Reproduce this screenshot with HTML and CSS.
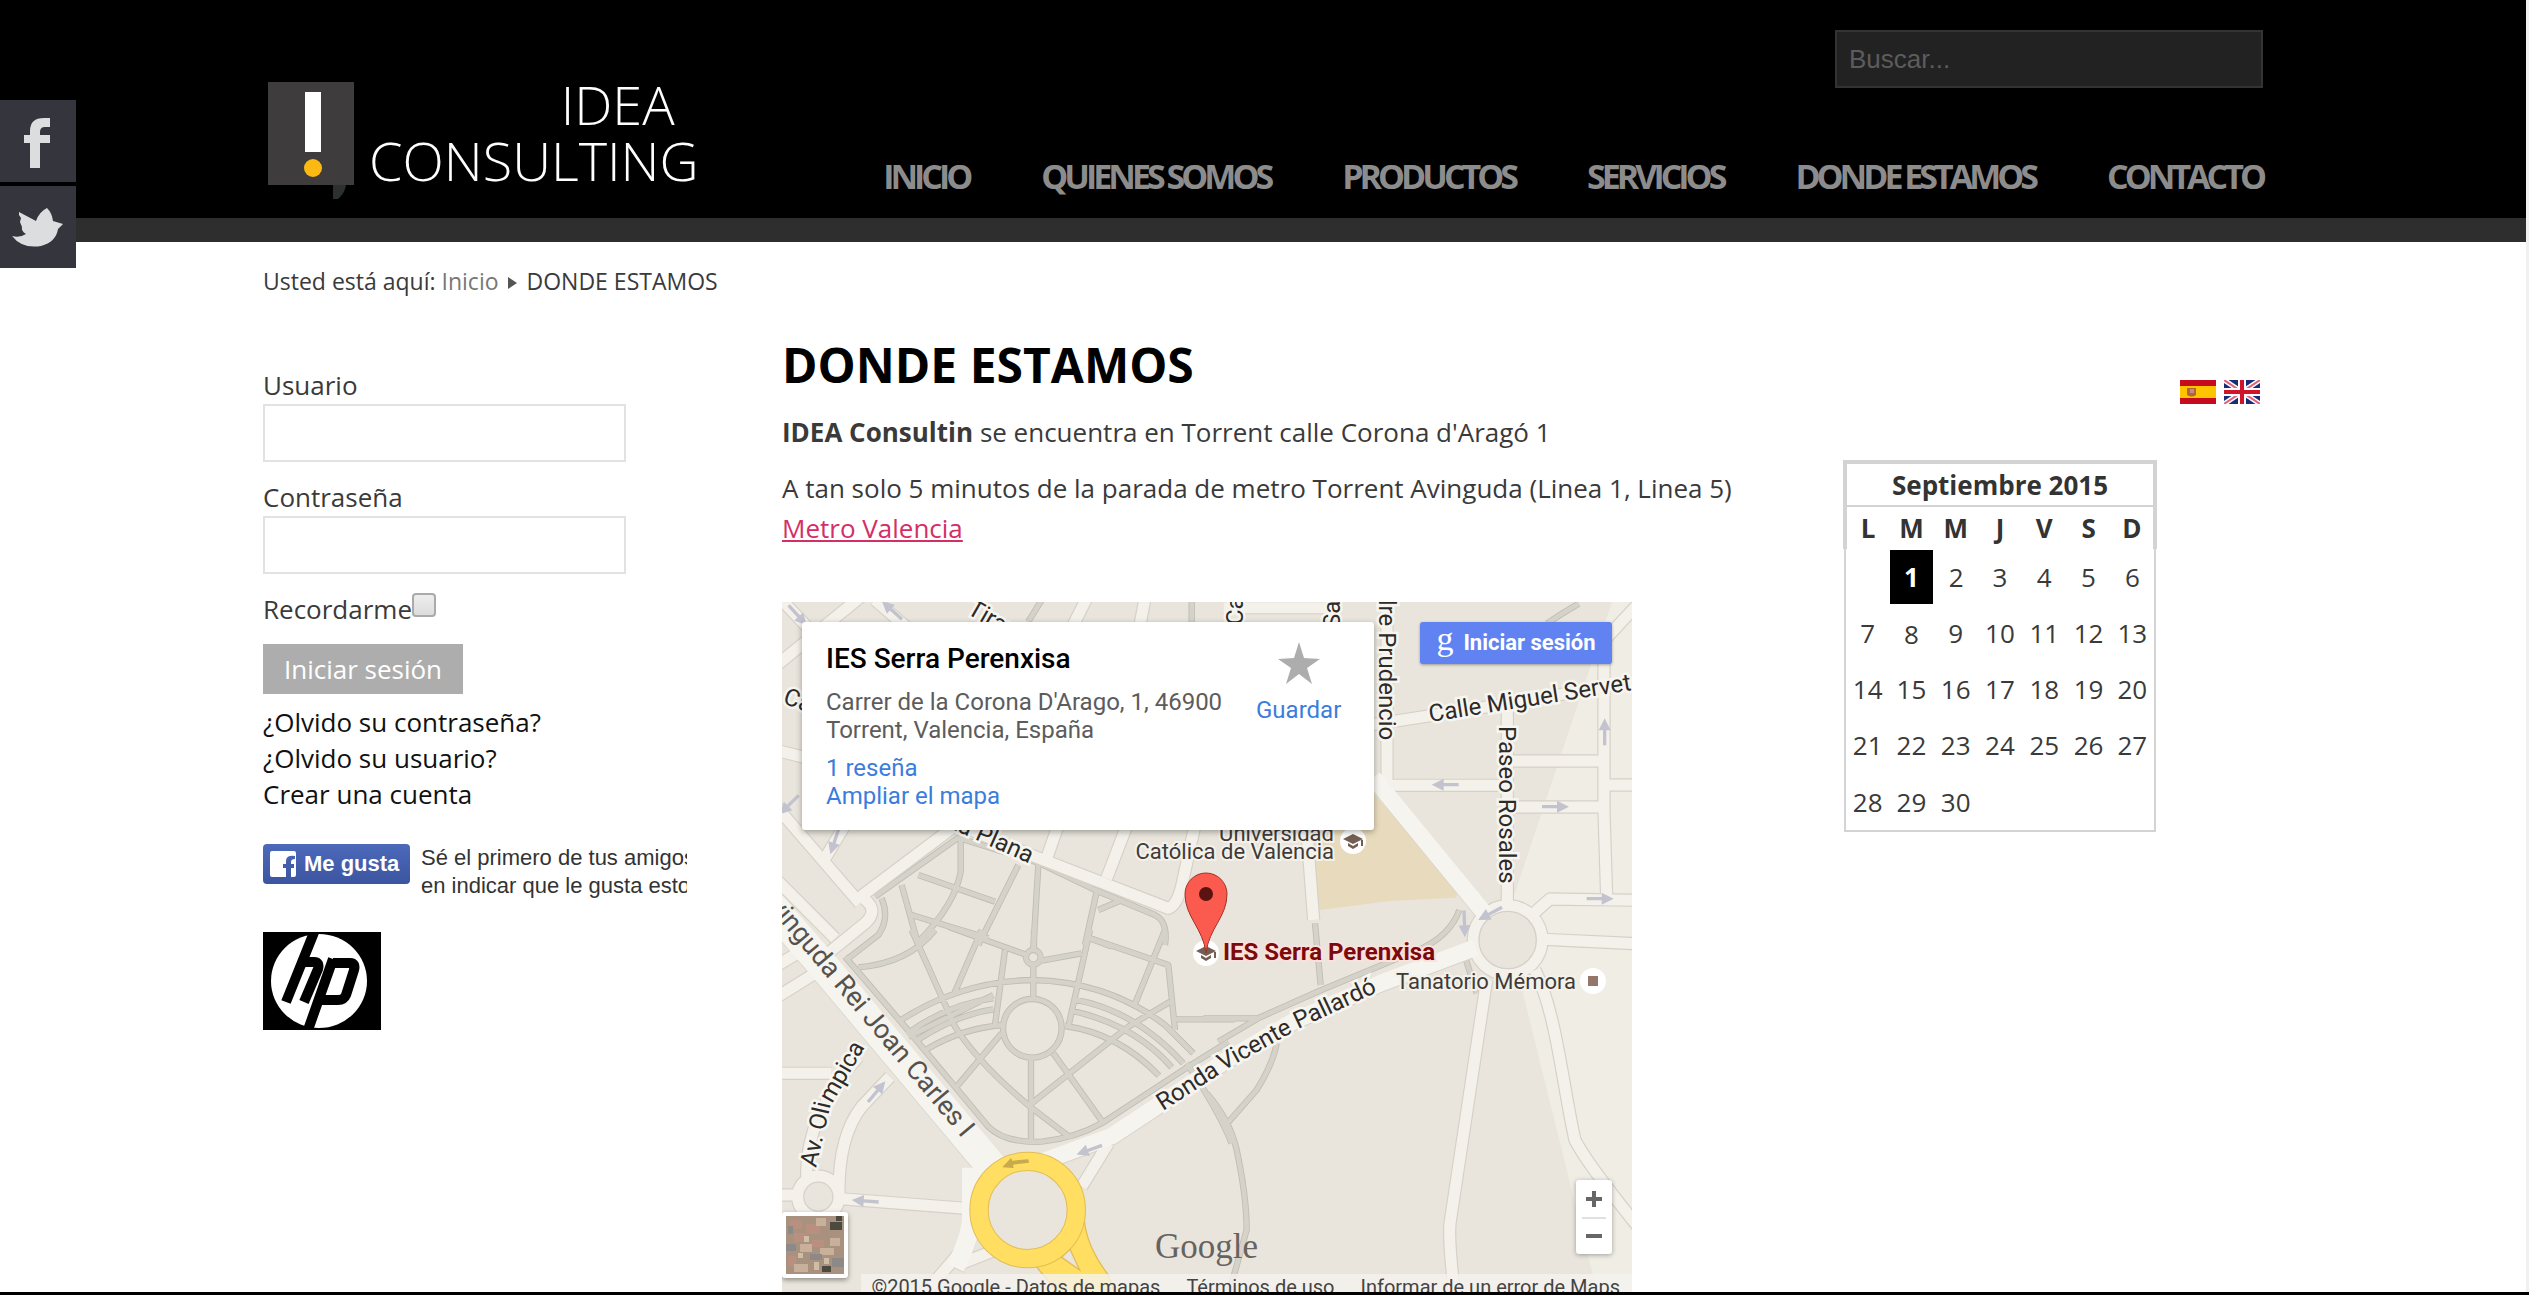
FILE: index.html
```html
<!DOCTYPE html>
<html lang="es">
<head>
<meta charset="utf-8">
<meta name="viewport" content="width=device-width, initial-scale=1">
<title>DONDE ESTAMOS</title>
<link rel="stylesheet" href="styles.css">
</head>
<body>
<header class="header">
  <div class="wrap header-inner">
    <a class="logo" href="#" aria-label="IDEA Consulting">
      <svg class="logo-mark" viewBox="0 0 88 118" aria-hidden="true">
        <path fill="#3e3c3d" d="M1 0h86v103H1z"/>
        <path fill="#2c3030" d="M66 103h13q-1 8-8 14h-5z"/>
        <path fill="#fff" d="M38 10h16v60H38z"/>
        <circle cx="46" cy="86" r="9" fill="#fdb913"/>
      </svg>
      <span class="logo-text"><span class="logo-top">IDEA</span><span>CONSULTING</span></span>
    </a>
    <div class="header-right">
      <form class="search"><input type="search" placeholder="Buscar..." aria-label="Buscar"></form>
      <nav class="menu">
        <a href="#">INICIO</a>
        <a href="#">QUIENES SOMOS</a>
        <a href="#">PRODUCTOS</a>
        <a href="#">SERVICIOS</a>
        <a href="#">DONDE ESTAMOS</a>
        <a href="#">CONTACTO</a>
      </nav>
    </div>
  </div>
</header>

<aside class="social">
  <a href="#" aria-label="Facebook"><svg viewBox="0 0 76 82"><path fill="#dcdddf" d="M50 18v9h-5q-5 0-5 5v3h10v8H40v25H30V43h-6v-8h6v-4q0-13 14-13z"/></svg></a>
  <a href="#" aria-label="Twitter"><svg viewBox="0 0 76 82"><path fill="#dcdddf" d="M19 26l17 9q3-9 11-13 5 5 6 13l10 3-5 5q-2 13-17 17-19 3-29-10 8 2 14-2-5-3-4-7l-2-5 1-4-2-3z"/></svg></a>
</aside>

<div class="wrap">
  <nav class="breadcrumb"><span>Usted está aquí:</span><a href="#">Inicio</a><svg viewBox="0 0 10 12"><path fill="#555" d="M0 0l9 6-9 6z"/></svg><span class="here">DONDE ESTAMOS</span></nav>
  <div class="columns">
    <div class="left">
      <form class="login">
        <label for="user">Usuario</label>
        <input class="field" id="user" type="text">
        <label for="pass">Contraseña</label>
        <input class="field" id="pass" type="password">
        <div class="remember"><label for="rem">Recordarme</label><input id="rem" type="checkbox"></div>
        <button type="button">Iniciar sesión</button>
      </form>
      <ul class="links">
        <li><a href="#">¿Olvido su contraseña?</a></li>
        <li><a href="#">¿Olvido su usuario?</a></li>
        <li><a href="#">Crear una cuenta</a></li>
      </ul>
      <div class="like">
        <button type="button"><svg viewBox="0 0 26 26"><path fill="#fff" fill-rule="evenodd" d="M2 0h22q2 0 2 2v22q0 2-2 2h-3V17h3v-4h-3v-2q0-3 4-3V5q-9-1-9 5v3h-3v4h3v9H2q-2 0-2-2V2q0-2 2-2z"/></svg>Me gusta</button>
        <p>Sé el primero de tus amigos<br>en indicar que le gusta esto.</p>
      </div>
      <svg class="hp" viewBox="0 0 118 98" role="img" aria-label="hp">
        <path d="M0 0h118v98H0z"/>
        <ellipse cx="56" cy="49" rx="48" ry="47" fill="#fff"/>
        <g fill="none" stroke="#000" stroke-width="10">
          <path d="M52-2L23 70M39 30h12q6 0 4 7L41 70"/>
          <path d="M70 27L45 98M70 31h17q6 0 4 7l-8 25q-2 5-8 5H59"/>
        </g>
      </svg>
    </div>

    <main class="main">
      <h1>DONDE ESTAMOS</h1>
      <p><strong>IDEA Consultin</strong> se encuentra en Torrent calle Corona d'Aragó 1</p>
      <p>A tan solo 5 minutos de la parada de metro Torrent Avinguda (Linea 1, Linea 5)<br><a href="#">Metro Valencia</a></p>
      <div class="map">
        <svg class="tiles" viewBox="0 0 850 710" preserveAspectRatio="xMidYMin slice">
          <defs>
            <g id="paths" fill="none" stroke-linejoin="round">
              <g transform="translate(-21 -21)">
                <path d="M300 905L550 728 790 803 960 885 1140 960Q1180 980 1170 1050M557 735V830Q540 930 430 1040M320 910Q345 970 310 1020L220 1090M380 870L430 1050M410 960L540 1000 640 1030M430 840L660 920M730 810L610 1050M790 810L775 1060M965 890L930 1050M970 945L1040 915M945 1030L1010 1055M760 80L800 15M1250 20V90"/>
              </g>
              <g transform="translate(-21 984)">
                <circle cx="772" cy="295" r="88"/><circle cx="775" cy="82" r="22"/>
                <path d="M777 0V60M775 104V205M768 383V632M210 80L390 290 640 590Q690 640 800 635 900 625 980 580L1240 410 1360 335M375 272Q560 152 775 150 1000 155 1170 285L1255 370M395 312Q520 222 655 205M420 335Q540 255 655 238M455 358Q560 295 685 285M895 208Q1080 240 1225 400M890 242Q1080 285 1190 412M870 288Q1030 310 1152 437M410 0L540 290Q610 400 765 530L880 618M620 0L538 190M480 0Q400 100 250 112M520-10L755 75M800 92L920 70M945 0L880 290M690 60L660 285M680 310L545 470M400 320L655 195M835 370L982 575M770 520L1060 290 1185 215M945 25L1180 105 1200 300M1170 0L1080 222M1200 268H1380M1235 400Q1330 540 1370 640"/>
              </g>
              <g transform="translate(1284 984)">
                <path d="M-20 265H140M25 335L150 262 330 182 620 62Q720 20 748-60M315-20L332 165M200 340Q190 400 140 480L52 580M-10 490Q60 570 80 660 110 800 110 900L65 1060M765 80L800 190"/>
              </g>
              <path d="M2295 65Q2330 40 2390 5"/>
            </g>
            <g id="roads" fill="none" stroke-linejoin="round">
              <g transform="translate(-21 -21)">
                <path d="M0 630L255 925M250 910L590 655M0 215L270-5M20 15L110 110M250 900Q320 940 270 985L165 1070M0 465L100 490M150 790L210 690M420 635L780 785 1180 940Q1210 930 1225 850L1260 690M815 790L850 690M995 850L1060 680M300 15L410 110M890 100L935 10M1095 90L1110 10M0 850L180 1030"/>
              </g>
              <g transform="translate(1284 -21)">
                <path d="M40 38H350M531 0V570M510 571H880M480 390L900 325 1300 255M892 340V950M890 498H1180M890 636H1180M1182 180V650L1190 905M1170 150L1300 10M1185 570H1300M290 700L311 975M960 965L1020 912 1300 916"/>
                <circle cx="893" cy="1035" r="103"/>
              </g>
              <g transform="translate(1284 984)">
                <path d="M830 150L720 880Q715 940 735 1100M975 120C1040 250 1060 480 1095 630Q1130 700 1300 910M1000 28L1300 42"/>
              </g>
              <g transform="translate(-21 984)">
                <path d="M192 790Q190 620 260 530L345 440M95 740Q90 560 250 380M180 805L570 835M-10 795H70M0 430H170M0 205L120 130M0 110L100 50M920 770L1000 640M560 1000L740 930M560 960L450 1090"/>
                <circle cx="130" cy="800" r="62"/>
              </g>
            </g>
            <g id="avenues" fill="none" stroke-linejoin="round">
              <path stroke-width="50" d="M760 1690L990 1605 1330 1380 1540 1258 1800 1145 2080 1040M1774 530L2110 940"/>
              <path stroke-width="56" d="M568 1700V1850Q565 1910 520 2000"/>
              <path stroke-width="92" d="M-50 895L120 1090 640 1710"/>
            </g>
            <path id="arrow" d="M0-5H30V-18L54 0 30 18V5H0z" transform="scale(1.5 1)"/>
          </defs>
          <g transform="scale(.33333)">
            <path fill="#e9e5dd" d="M0 0h2550v2130H0z"/>
            <path fill="#f0ede5" d="M2490 0h60v2130h-90L2170 960z"/>
            <path fill="#e8dbbd" d="M1570 700L1775 575 2030 860 2022 887 1824 897 1614 924z"/>
            <use href="#paths" stroke="#bfbcb3" stroke-width="19"/>
            <use href="#paths" stroke="#d5d2c9" stroke-width="14"/>
            <use href="#roads" stroke="#d5d1c8" stroke-width="40"/>
            <g stroke="#d5d1c8"><use href="#avenues"/></g>
            <use href="#roads" stroke="#f4f1eb" stroke-width="33"/>
            <g stroke="#f6f4ee" transform="translate(0 -3)"><use href="#avenues"/></g>
            <circle cx="2177" cy="1014" r="86" fill="#e9e5dd" stroke="#d5d1c8" stroke-width="4"/>
            <g transform="translate(-21 984)">
              <path fill="#ffde62" stroke="#e2bd55" stroke-width="4" d="M928 870Q935 950 1000 1035L1040 1150H900L780 1005z"/>
              <circle cx="758" cy="840" r="146" fill="#e9e5dd" stroke="#e2bd55" stroke-width="58"/>
              <circle cx="758" cy="840" r="146" fill="none" stroke="#ffde62" stroke-width="52"/>
              <path fill="#e9e5dd" stroke="#e2bd55" stroke-width="4" d="M885 958L914 1020 860 982z"/>
              <path fill="#c8a94b" d="M682 712l26-28 4 8 48-4 2 10-48 6 2 10z"/>
            </g>
            <g fill="#c2c3cf">
              <use href="#arrow" transform="translate(2030 548) rotate(180)"/>
              <use href="#arrow" transform="translate(2280 614)"/>
              <use href="#arrow" transform="translate(2414 890)"/>
              <use href="#arrow" transform="translate(2468 430) rotate(-90)"/>
              <use href="#arrow" transform="translate(2046 925) rotate(88)"/>
              <use href="#arrow" transform="translate(2160 916) rotate(152)"/>
              <use href="#arrow" transform="translate(20 10) rotate(48)"/>
              <use href="#arrow" transform="translate(360 52) rotate(222)"/>
              <use href="#arrow" transform="translate(50 580) rotate(135)"/>
              <use href="#arrow" transform="translate(170 680) rotate(108)"/>
              <use href="#arrow" transform="translate(258 1500) rotate(-50)"/>
              <use href="#arrow" transform="translate(290 1800) rotate(184)"/>
              <use href="#arrow" transform="translate(960 1630) rotate(160)"/>
            </g>
          </g>
          <g class="street">
            <text transform="translate(184 11) rotate(30)">Tirant</text>
            <text transform="translate(0 101) rotate(20)">Calle</text>
            <text transform="translate(163 224) rotate(24)">La Plana</text>
            <text transform="translate(461 23) rotate(-90)">Cal</text>
            <text transform="translate(558 26) rotate(-90)">Sant</text>
            <text transform="translate(597 -38) rotate(90)">Padre Prudencio</text>
            <text transform="translate(648 120) rotate(-9)">Calle Miguel Servet</text>
            <text transform="translate(717 124) rotate(90)">Paseo Rosales</text>
            <text transform="translate(381 509) rotate(-33)">Ronda</text>
            <text transform="translate(441 469) rotate(-29)">Vicente</text>
            <text transform="translate(516 427) rotate(-25)">Pallardó</text>
            <text transform="translate(34 566) rotate(-77)">Av. Oli</text>
            <text transform="translate(50 502) rotate(-60)">mpica</text>
          </g>
          <text class="avenue" transform="translate(-25 292) rotate(50)">Avinguda Rei Joan Carles I</text>
          <g class="place">
            <text x="552" y="239" text-anchor="end">Universidad</text>
            <text x="552" y="257" text-anchor="end">Católica de Valencia</text>
            <text x="614" y="387">Tanatorio Mémora</text>
            <text class="target" x="441" y="358">IES Serra Perenxisa</text>
          </g>
          <g fill="#fff">
            <circle cx="571" cy="239" r="13"/><circle cx="424" cy="351" r="13"/><circle cx="811" cy="379" r="13"/>
          </g>
          <g fill="#735e54">
            <g id="cap"><path d="M561 237l10-5 10 5-10 5zM566 241l5 3 5-3v3l-5 3-5-3zM579 238h2v6h-2z"/></g>
            <use href="#cap" x="-147" y="112"/>
            <path fill="#94776a" d="M806 374h10v10h-10z"/>
          </g>
          <path fill="#fb5b4f" stroke="#a52f27" d="M424 351C421 326 403 315 403 292A21 21 0 0 1 445 292C445 315 427 326 424 351z"/>
          <circle cx="424" cy="292" r="7" fill="#5a1310"/>
        </svg>
        <div class="place-card">
          <div class="place-info">
            <h2>IES Serra Perenxisa</h2>
            <address>Carrer de la Corona D'Arago, 1, 46900<br>Torrent, Valencia, España</address>
            <a href="#">1 reseña</a>
            <a href="#">Ampliar el mapa</a>
          </div>
          <a class="save" href="#"><svg viewBox="0 0 42 42"><path fill="#adadad" d="M21 0l5 16 16 1-13 9 5 16-13-10L8 42l5-16L0 17l16-1z"/></svg>Guardar</a>
        </div>
        <button class="signin" type="button"><span class="g">g</span>Iniciar sesión</button>
        <button class="sat" type="button" aria-label="Satélite"><svg viewBox="0 0 58 58">
          <path fill="#a8917f" d="M0 0h58v58H0z"/>
          <g fill="#b99080"><path d="M4 4h12v9H4zM20 8h14v10H20zM8 17h12v9H8zM2 40h8v10H2zM26 24h12v7H26z"/></g>
          <g fill="#c9b09a"><path d="M14 28h12v8H14zM34 32h14v7H34zM8 48h14v8H8zM44 22h10v8H44zM30 2h10v8H30z"/></g>
          <g fill="#8d8987"><path d="M0 28h10v7H0zM24 38h12v6H24zM46 42h12v9H46zM2 10h5v8H2z"/></g>
          <g fill="#4c493f"><path d="M44 6h12v8H44zM36 50h9v6h-9zM50 0h6v5h-6z"/></g>
          <g fill="#d0bda6"><path d="M18 20h5v6h-5zM38 42h5v6h-5zM12 37h5v5h-5zM28 46h5v8h-5z"/></g>
        </svg></button>
        <span class="brand">Google</span>
        <div class="zoom"><button type="button" aria-label="Acercar"></button><button class="out" type="button" aria-label="Alejar"></button></div>
        <div class="terms"><span>©2015 Google - Datos de mapas</span><a href="#">Términos de uso</a><a href="#">Informar de un error de Maps</a></div>
      </div>
    </main>

    <aside class="right">
      <div class="flags">
        <a href="#" aria-label="Español"><svg viewBox="0 0 36 24"><path fill="#c60b1e" d="M0 0h36v24H0z"/><path fill="#ffc400" d="M0 6h36v12H0z"/><path fill="#ad6a2c" d="M7 8h9v7q-4 3-9 0z"/><path fill="#c9849a" d="M10 9h4v4h-4z"/></svg></a>
        <a href="#" aria-label="English"><svg viewBox="0 0 36 24"><path fill="#1b2c77" d="M0 0h36v24H0z"/><path stroke="#fff" stroke-width="5" d="M0 0l36 24M36 0L0 24"/><path stroke="#e0627a" stroke-width="2" d="M0 0l36 24M36 0L0 24"/><path stroke="#fff" stroke-width="8" d="M18 0v24M0 12h36"/><path stroke="#cf142b" stroke-width="4" d="M18 0v24M0 12h36"/></svg></a>
      </div>
      <table class="calendar">
        <thead>
          <tr class="month"><th colspan="7">Septiembre 2015</th></tr>
          <tr class="days"><th>L</th><th>M</th><th>M</th><th>J</th><th>V</th><th>S</th><th>D</th></tr>
        </thead>
        <tbody>
          <tr><td></td><td class="today">1</td><td>2</td><td>3</td><td>4</td><td>5</td><td>6</td></tr>
          <tr><td>7</td><td>8</td><td>9</td><td>10</td><td>11</td><td>12</td><td>13</td></tr>
          <tr><td>14</td><td>15</td><td>16</td><td>17</td><td>18</td><td>19</td><td>20</td></tr>
          <tr><td>21</td><td>22</td><td>23</td><td>24</td><td>25</td><td>26</td><td>27</td></tr>
          <tr><td>28</td><td>29</td><td>30</td><td></td><td></td><td></td><td></td></tr>
        </tbody>
      </table>
    </aside>
  </div>
</div>
<div class="bottom-bar"></div>
</body>
</html>
```
FILE: styles.css
```css
* { box-sizing: border-box; }
body {
  margin: 0;
  height: 100vh;
  overflow: hidden;
  border-right: 3px solid #f1f1f1;
  background: #fff;
  color: #3a3a3a;
  font: 26px/40px "Open Sans", sans-serif;
}
a { text-decoration: none; color: inherit; }
button, input { font: inherit; margin: 0; }
svg { display: block; }
.wrap { max-width: 2000px; margin: 0 auto; }

/* Header */
.header { background: #000; border-bottom: 24px solid #2e2e2e; }
.header-inner { display: flex; justify-content: space-between; height: 218px; }
.logo { display: flex; gap: 14px; padding: 82px 0 0 4px; color: #fff; }
.logo-mark { width: 88px; height: 118px; }
.logo-text { display: flex; flex-direction: column; margin-top: -6px; font-weight: 300; font-size: 54px; line-height: 56px; }
.logo-top { text-align: right; padding-right: 24px; }
.header-right { display: flex; flex-direction: column; align-items: flex-end; padding-top: 30px; }
.search input {
  width: 428px;
  height: 58px;
  padding: 0 12px;
  border: 2px solid #333;
  border-radius: 0;
  background: #222;
  color: #666;
  font: 26px/40px "Liberation Sans", sans-serif;
}
.search input::placeholder { color: #5c5c5c; opacity: 1; }
.menu { display: flex; gap: 72px; margin-top: 64px; color: #8c8c8c; font-weight: 700; font-size: 34px; line-height: 48px; letter-spacing: -4px; }

/* Social tabs fixed to the window edge */
.social { position: absolute; left: 0; top: 100px; display: flex; flex-direction: column; gap: 4px; background: #000; }
.social a { width: 76px; height: 82px; background: #34353d; }

.breadcrumb { display: flex; align-items: center; padding-top: 19px; margin-bottom: 1px; font-size: 23px; }
.breadcrumb a { margin-left: 6px; color: #777; }
.breadcrumb svg { width: 10px; height: 12px; margin: 4px 9px 0; }

.columns { display: grid; grid-template-columns: 424px 1fr 420px; gap: 95px; }

/* Login column */
.left { padding-top: 64px; }
.login { display: flex; flex-direction: column; align-items: flex-start; }
.login label { line-height: 38px; }
.login .field { width: 363px; height: 58px; margin-bottom: 16px; border: 2px solid #e2e2e2; background: #fff; }
.remember { display: flex; align-items: flex-start; }
.remember input { appearance: none; width: 24px; height: 24px; margin-top: 3px; border: 2px solid #aaa; border-radius: 4px; background: linear-gradient(#eee, #dcdcdc); }
.login button { margin-top: 16px; width: 200px; height: 50px; padding: 0; border: 0; background: #adadad; color: #fff; }
.links { list-style: none; margin: 10px 0 0; padding: 0; color: #111; line-height: 36px; }
.like { display: flex; gap: 11px; margin-top: 32px; overflow: hidden; white-space: nowrap; font: 22px/28px "Liberation Sans", sans-serif; color: #333; }
.like button { flex: none; display: flex; align-items: center; gap: 8px; width: 147px; height: 40px; padding: 0 7px; border: 0; border-radius: 4px; background: linear-gradient(#4c69ba, #3b55a0); color: #fff; font-weight: bold; }
.like svg { width: 26px; height: 26px; }
.like p { margin: 0; }
.hp { width: 118px; height: 98px; margin-top: 32px; }

/* Article */
.main h1 { margin: 34px 0 0; color: #000; font-size: 48px; line-height: 58px; }
.main p { margin: 18px 0 16px; }
.main p + p { margin-top: 0; }
.main p a { color: #d42e67; text-decoration: underline; }
.map { position: relative; width: 850px; margin-top: 54px; overflow: hidden; font-family: Roboto, sans-serif; }
.tiles { width: 100%; }
.street text { font: 24px Roboto, sans-serif; fill: #2d2a28; stroke: #f7f5f0; stroke-width: 5px; paint-order: stroke; }
.avenue { font: 27px Roboto, sans-serif; fill: #55524e; }
.place text { font: 22px Roboto, sans-serif; fill: #3f3b38; stroke: #f4f1eb; stroke-width: 4px; paint-order: stroke; }
.place .target { font-weight: 700; font-size: 24px; fill: #7c0a0a; stroke: #fbe0dc; }
.place-card { position: absolute; left: 20px; top: 20px; display: flex; gap: 32px; width: 572px; height: 208px; padding: 20px 24px; border-radius: 3px; background: #fff; box-shadow: 0 2px 6px #0005; font-size: 24px; line-height: 28px; color: #5c5c5c; white-space: nowrap; }
.place-card h2 { margin: 0 0 12px; color: #000; font-size: 28px; line-height: 34px; font-weight: 500; }
.place-card address { margin-bottom: 10px; font-style: normal; }
.place-info { width: 398px; }
.place-info a { display: block; }
.place-card a { color: #3b7ddd; }
.save { display: flex; flex-direction: column; align-items: center; gap: 12px; }
.save svg { width: 42px; height: 42px; }
.signin { position: absolute; right: 20px; top: 20px; display: flex; align-items: center; justify-content: center; gap: 10px; width: 192px; height: 42px; padding: 0; border: 0; border-radius: 3px; background: #6083f1; color: #fff; font-size: 22px; font-weight: 700; white-space: nowrap; box-shadow: 0 1px 3px #0005; }
.signin .g { font: 34px/34px "Liberation Serif", serif; margin-top: -8px; }
.sat { position: absolute; left: 0; top: 610px; width: 66px; height: 66px; padding: 4px; border: 0; border-radius: 3px; background: #fff; box-shadow: 0 2px 5px #0006; }
.brand { position: absolute; left: 373px; top: 625px; color: #66635f; font: 35px/40px "Liberation Serif", serif; }
.zoom { position: absolute; right: 20px; top: 578px; width: 36px; height: 74px; border-radius: 3px; background: #fff; box-shadow: 0 1px 5px #0005; }
.zoom button { display: block; width: 36px; height: 37px; padding: 0; border: 0; background: linear-gradient(#666, #666) center / 16px 4px no-repeat, linear-gradient(#666, #666) center / 4px 16px no-repeat; }
.zoom .out { background: linear-gradient(#e0e0e0, #e0e0e0) top / 24px 2px no-repeat, linear-gradient(#666, #666) center / 16px 4px no-repeat; }
.terms { position: absolute; right: 0; top: 672px; display: flex; gap: 26px; padding: 0 12px 0 10px; background: #f5f3efcc; color: #444; font-size: 20px; line-height: 26px; white-space: nowrap; }

/* Right column */
.right { padding-top: 78px; }
.flags { display: flex; justify-content: flex-end; gap: 8px; padding-right: 3px; }
.flags svg { width: 36px; height: 24px; }
.calendar { width: 314px; margin-top: 56px; border-collapse: collapse; table-layout: fixed; text-align: center; border: 2px solid #d3d3d3; }
.calendar thead { border: 4px solid #d3d3d3; border-bottom: 0; }
.calendar th, .calendar td { padding: 0; }
.calendar th { height: 43px; color: #333; }
.calendar .month th { height: 44px; border-bottom: 2px solid #d3d3d3; }
.calendar td { height: 56px; }
.calendar tr:last-child td { height: 58px; }
.calendar .today { background: #000 padding-box; color: #fff; font-weight: bold; border: 2px solid #fff; }

.bottom-bar { position: fixed; left: 0; right: 0; bottom: 0; height: 3px; background: #000; }
```
